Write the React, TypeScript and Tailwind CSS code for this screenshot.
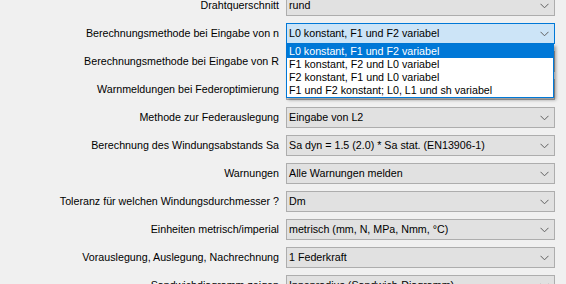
const rows = [
  { label: "Drahtquerschnitt", value: "rund" },
  { label: "Berechnungsmethode bei Eingabe von n", value: "L0 konstant, F1 und F2 variabel", open: true },
  { label: "Berechnungsmethode bei Eingabe von R", value: "L0 konstant, F1 und F2 variabel" },
  { label: "Warnmeldungen bei Federoptimierung", value: "Alle Warnungen melden" },
  { label: "Methode zur Federauslegung", value: "Eingabe von L2" },
  { label: "Berechnung des Windungsabstands Sa", value: "Sa dyn = 1.5 (2.0) * Sa stat. (EN13906-1)" },
  { label: "Warnungen", value: "Alle Warnungen melden" },
  { label: "Toleranz für welchen Windungsdurchmesser ?", value: "Dm" },
  { label: "Einheiten metrisch/imperial", value: "metrisch (mm, N, MPa, Nmm, °C)" },
  { label: "Vorauslegung, Auslegung, Nachrechnung", value: "1 Federkraft" },
  { label: "Sandwichdiagramm zeigen", value: "Innenradius (Sandwich-Diagramm)" },
];

const options = [
  "L0 konstant, F1 und F2 variabel",
  "F1 konstant, F2 und L0 variabel",
  "F2 konstant, F1 und L0 variabel",
  "F1 und F2 konstant; L0, L1 und sh variabel",
];

function Chevron() {
  return (
    <svg width="9" height="6" viewBox="0 0 9 6" className="shrink-0">
      <polyline points="0.5,0.8 4.5,4.8 8.5,0.8" fill="none" stroke="#606060" strokeWidth="1" />
    </svg>
  );
}

function Combo({ value, open }: { value: string; open?: boolean }) {
  return (
    <div
      className={
        open
          ? "flex h-[21px] w-[269px] items-center justify-between border border-[#0078d7] bg-[#cce4f7] pl-[2px] pr-[5px]"
          : "flex h-[21px] w-[269px] items-center justify-between border border-[#adadad] bg-[#e1e1e1] pl-[2px] pr-[5px]"
      }
    >
      <span className="whitespace-nowrap">{value}</span>
      <Chevron />
    </div>
  );
}

export default function App() {
  return (
    <div
      className="relative h-[284px] w-[566px] overflow-hidden bg-[#f0f0f0] text-[10.7px] text-black"
      style={{ fontFamily: '"Liberation Sans", Arial, sans-serif' }}
    >
      <div className="-mt-[5px] flex flex-col">
        {rows.map((row) => (
          <div key={row.label} className="flex h-[28px] items-start">
            <div className="w-[279px] whitespace-nowrap text-right leading-[21px]">{row.label}</div>
            <div className="ml-[7px]">
              <Combo value={row.value} open={row.open} />
            </div>
          </div>
        ))}
      </div>

      <ul className="absolute left-[286px] top-[44px] w-[268px] border border-[#0078d7] bg-white shadow-[2px_2px_3px_rgba(0,0,0,0.35)]">
        {options.map((opt, i) => (
          <li
            key={opt}
            className={
              i === 0
                ? "h-[13px] whitespace-nowrap bg-[#0078d7] pl-[2px] leading-[13px] text-white"
                : "h-[13px] whitespace-nowrap pl-[2px] leading-[13px]"
            }
          >
            {opt}
          </li>
        ))}
      </ul>
    </div>
  );
}
